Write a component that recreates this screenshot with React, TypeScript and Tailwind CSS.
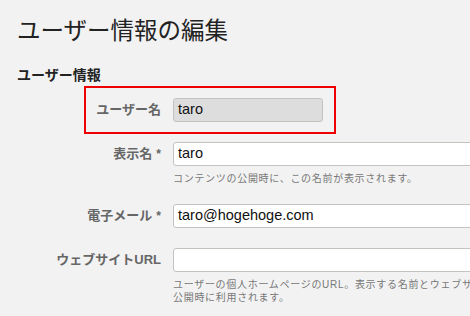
import React from "react"

const font = { fontFamily: '"Liberation Sans", "Noto Sans CJK JP", sans-serif' }

type RowProps = {
  label: string
  required?: boolean
  value?: string
  disabled?: boolean
  help?: React.ReactNode
}

const Row = ({ label, required, value, disabled, help }: RowProps) => (
  <div className="flex items-start">
    <div className="flex h-6 w-[144px] shrink-0 items-center justify-end text-[13px] font-bold text-[#666]">
      {label}
      {required && <span className="ml-1 text-[12px]">*</span>}
    </div>
    <div className="ml-3 flex-1">
      <div
        className={`flex h-6 items-center rounded-[3px] border border-[#c6c2be] pl-1 text-[14.5px] text-[#111] ${
          disabled ? "w-[150px] bg-[#dddddd]" : "w-[340px] bg-white"
        }`}
      >
        {value}
      </div>
      {help && <p className="mt-[6px] text-[10px] leading-[13px] tracking-[0.7px] text-[#777]">{help}</p>}
    </div>
  </div>
)

const App = () => {
  return (
    <div className="h-[316px] w-[470px] overflow-hidden bg-[#f2f2f2] px-[17px]" style={font}>
      <h1 className="pt-[16px] text-[23.5px] leading-[30px] text-[#222]">ユーザー情報の編集</h1>
      <h2 className="mt-[20px] text-[14px] font-bold leading-[18px] text-[#222]">ユーザー情報</h2>

      <div className="relative mt-[14px] w-[600px]">
        {/* highlight */}
        <div className="absolute left-[67px] top-[-12px] h-[48px] w-[252px] border-2 border-[#ee0000]" />
        <Row label="ユーザー名" value="taro" disabled />
        <div className="mt-5">
          <Row label="表示名" required value="taro" help="コンテンツの公開時に、この名前が表示されます。" />
        </div>
        <div className="mt-[19px]">
          <Row label="電子メール" required value="taro@hogehoge.com" />
        </div>
        <div className="mt-5">
          <Row
            label="ウェブサイトURL"
            help={
              <>
                ユーザーの個人ホームページのURL。表示する名前とウェブサイトURLはコンテンツの
                <br />
                公開時に利用されます。
              </>
            }
          />
        </div>
      </div>
    </div>
  )
}

export default App
